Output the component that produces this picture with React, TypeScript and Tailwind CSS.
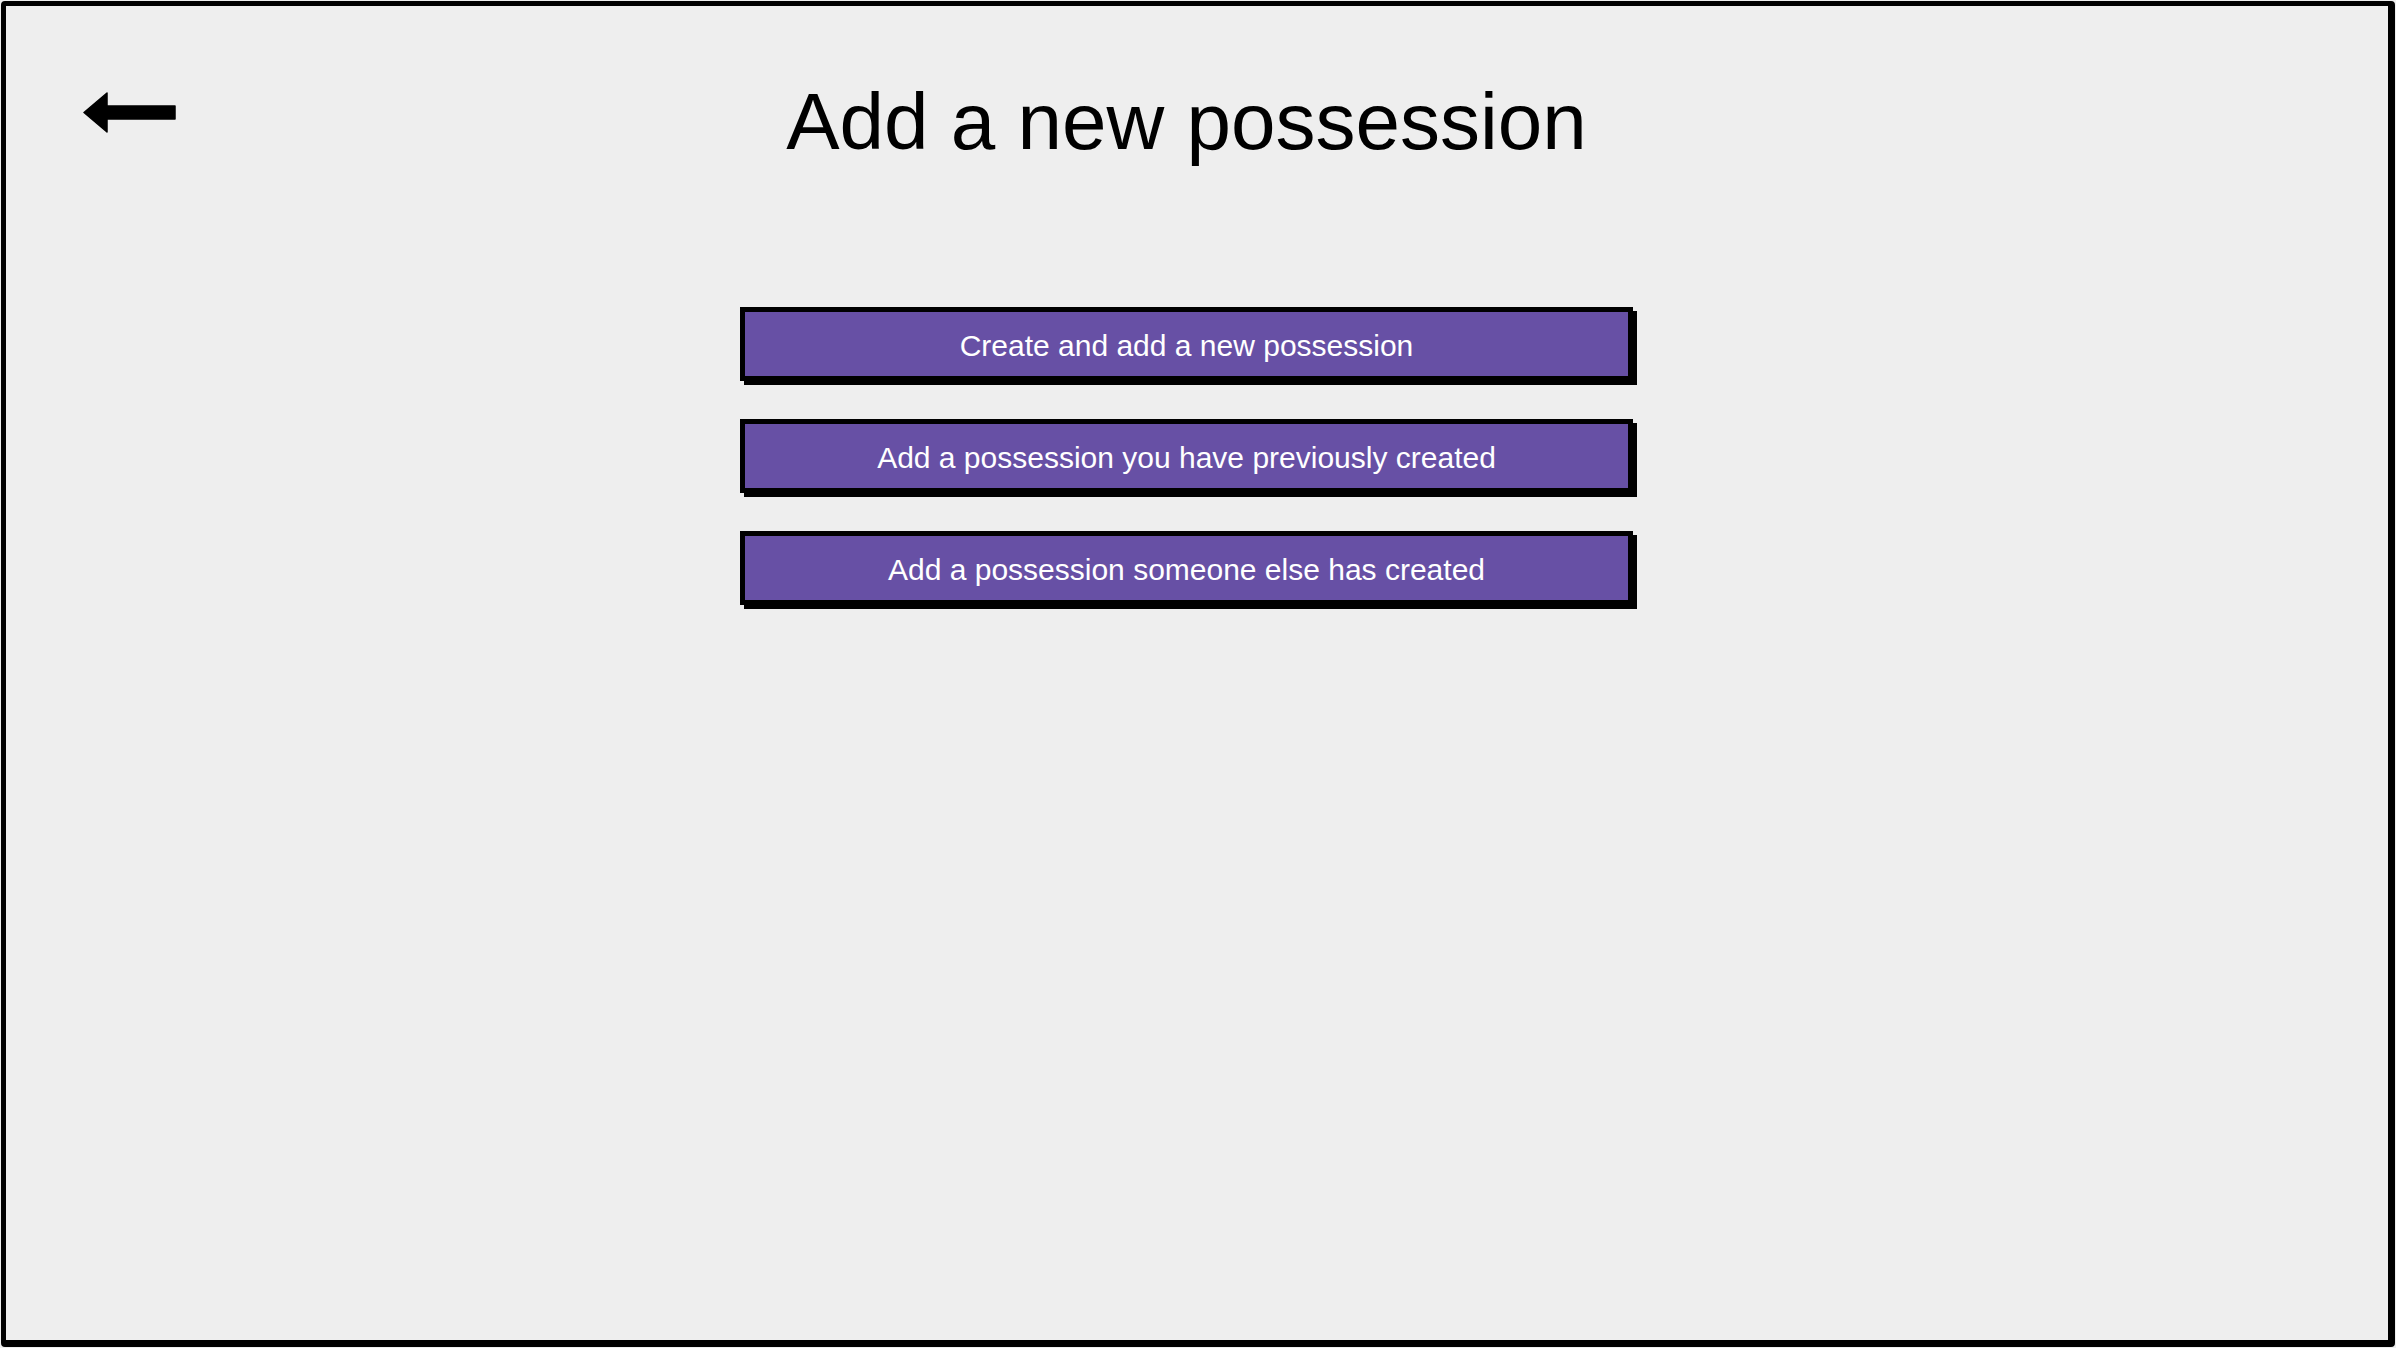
const options = [
  "Create and add a new possession",
  "Add a possession you have previously created",
  "Add a possession someone else has created",
];

function BackArrow() {
  return (
    <svg width="93" height="41" viewBox="0 0 93 41" className="block">
      <path
        d="M1 20.5 L24 1 L24 14 L92 14 L92 27 L24 27 L24 40 Z"
        fill="#000"
        stroke="#000"
        strokeWidth="1.5"
        strokeLinejoin="round"
      />
    </svg>
  );
}

export default function App() {
  return (
    <main className="w-[2396px] h-[1348px] p-px bg-[#eeeeee] font-['Liberation_Sans',Arial,sans-serif]">
      <div className="h-full w-full flex border-[5px] border-r-[7px] border-b-[7px] border-black rounded-sm bg-[#eeeeee]">
        {/* back */}
        <div className="ml-[77px] mt-[86px]">
          <BackArrow />
        </div>

        {/* content column */}
        <div className="ml-[564px] w-[893px] flex flex-col">
          <h1 className="mt-[76px] h-[80px] text-[80px] leading-[80px] text-black text-center whitespace-nowrap">
            Add a new possession
          </h1>

          <div className="mt-[145px] flex flex-col gap-[38px]">
            {options.map((label) => (
              <button
                key={label}
                className="w-[893px] h-[74px] pt-[3px] border-[5px] border-black bg-[#6750a5] shadow-[4px_4px_0_#000] text-white text-[30px] leading-none flex items-center justify-center"
              >
                {label}
              </button>
            ))}
          </div>
        </div>
      </div>
    </main>
  );
}
